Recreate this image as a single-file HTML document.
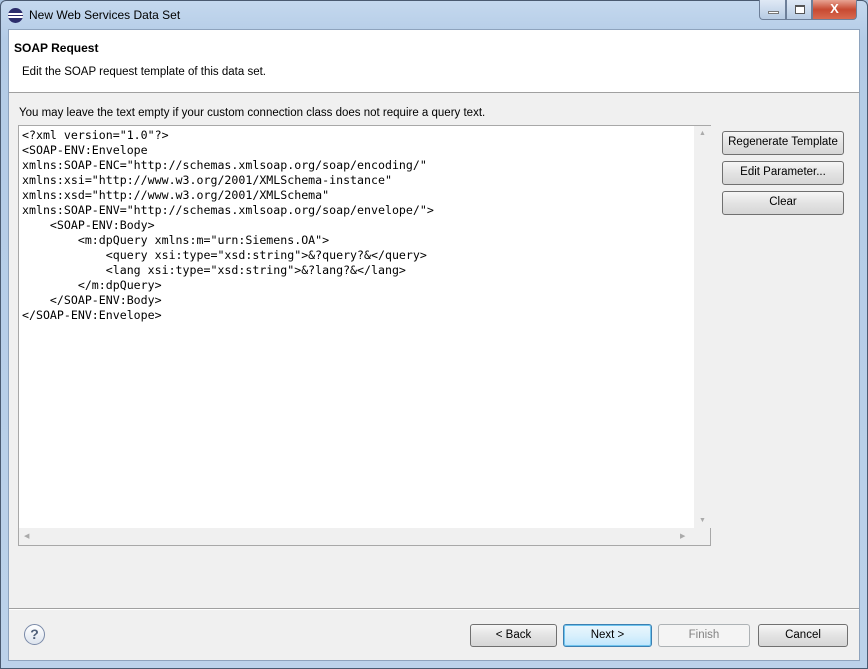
<!DOCTYPE html>
<html><head><style>
*{margin:0;padding:0;box-sizing:border-box}
body{width:868px;height:669px;overflow:hidden;background:#a9c3df;font-family:"Liberation Sans",sans-serif;font-size:11.5px;color:#000;position:relative}
.frame{position:absolute;left:0;top:0;width:868px;height:669px;background:linear-gradient(#c4d8ee,#b3cbe6 40px,#bcd2ea);border:1px solid #4a5a70;border-radius:6px 6px 0 0}
.title{position:absolute;left:29px;top:8px;font-size:12px;color:#000}
.icon{position:absolute;left:8px;top:8px;width:15px;height:15px;border-radius:50%;background:#2b2d6b;overflow:hidden}
.icon:before{content:"";position:absolute;left:0;top:5px;width:15px;height:1.5px;background:#fff;box-shadow:0 3px 0 #fff}
.wb{position:absolute;top:0;height:20px;border:1px solid #6d7f99;border-top:none}
.client{position:absolute;left:8px;top:29px;width:852px;height:632px;background:#f0f0f0;border:1px solid #8ea3bd}
.hdr{position:absolute;left:0;top:0;width:850px;height:63px;background:#fff;border-bottom:1px solid #a0a0a0}
.b{position:absolute;background:linear-gradient(#f6f6f6,#e3e3e3 50%,#d6d6d6);border:1px solid #707070;border-radius:3px;text-align:center;font-size:11.5px;line-height:21px}
.ta{position:absolute;left:18px;top:125px;width:693px;height:421px;border:1px solid #a8a8a8;background:#fff}
pre{position:absolute;left:3px;top:2px;font-family:"DejaVu Sans Mono","Liberation Mono",monospace;font-size:11.6px;line-height:15px;color:#000}
</style></head><body>
<div class="frame"></div>
<div class="icon"></div>
<div class="title">New Web Services Data Set</div>
<div class="wb" style="left:759px;width:27px;background:linear-gradient(#dfe9f5,#b7cbe3);border-radius:0 0 0 4px"><div style="position:absolute;left:8px;top:11px;width:11px;height:3px;border:1px solid #777;background:#fff"></div></div>
<div class="wb" style="left:786px;width:26px;background:linear-gradient(#dfe9f5,#b7cbe3)"><div style="position:absolute;left:8px;top:5px;width:10px;height:9px;border:1px solid #555;border-top-width:2px;background:#fff"></div></div>
<div class="wb" style="left:812px;width:45px;background:linear-gradient(#e8a493,#c74a32 50%,#d96a50);border-radius:0 0 4px 0;color:#fff;font-weight:bold;text-align:center;line-height:18px;font-size:13px">X</div>
<div class="client">
<div class="hdr">
<div style="position:absolute;left:5px;top:11px;font-weight:bold;font-size:12px">SOAP Request</div>
<div style="position:absolute;left:13px;top:36px">Edit the SOAP request template of this data set.</div>
</div>
<div style="position:absolute;left:10px;top:77px">You may leave the text empty if your custom connection class does not require a query text.</div>
<div style="position:absolute;left:0;top:578px;width:850px;border-top:1px solid #a0a0a0;border-bottom:1px solid #fff"></div>
</div>
<div class="ta"><pre>&lt;?xml version="1.0"?&gt;
&lt;SOAP-ENV:Envelope
xmlns:SOAP-ENC="http://schemas.xmlsoap.org/soap/encoding/"
xmlns:xsi="http://www.w3.org/2001/XMLSchema-instance"
xmlns:xsd="http://www.w3.org/2001/XMLSchema"
xmlns:SOAP-ENV="http://schemas.xmlsoap.org/soap/envelope/"&gt;
    &lt;SOAP-ENV:Body&gt;
        &lt;m:dpQuery xmlns:m="urn:Siemens.OA"&gt;
            &lt;query xsi:type="xsd:string"&gt;&amp;?query?&amp;&lt;/query&gt;
            &lt;lang xsi:type="xsd:string"&gt;&amp;?lang?&amp;&lt;/lang&gt;
        &lt;/m:dpQuery&gt;
    &lt;/SOAP-ENV:Body&gt;
&lt;/SOAP-ENV:Envelope&gt;</pre>
<div style="position:absolute;left:675px;top:0;width:17px;height:402px;background:#f0f0f0;color:#aaa;font-size:7px;text-align:center"><div style="margin-top:4px">▲</div><div style="position:absolute;bottom:4px;width:17px">▼</div></div>
<div style="position:absolute;left:0;top:402px;width:691px;height:17px;background:#f0f0f0;color:#aaa;font-size:7px;line-height:17px"><span style="position:absolute;left:5px">◀</span><span style="position:absolute;left:661px">▶</span></div>
</div>
<div class="b" style="left:722px;top:131px;width:122px;height:24px">Regenerate Template</div>
<div class="b" style="left:722px;top:161px;width:122px;height:24px">Edit Parameter...</div>
<div class="b" style="left:722px;top:191px;width:122px;height:24px">Clear</div>
<div style="position:absolute;left:24px;top:624px;width:21px;height:21px;border:1.5px solid #7a8aa8;border-radius:50%;background:linear-gradient(#fff,#dde4ee);text-align:center;font-weight:bold;color:#50607a;line-height:19px;font-size:14px">?</div>
<div class="b" style="left:470px;top:624px;width:87px;height:23px">&lt; Back</div>
<div class="b" style="left:563px;top:624px;width:89px;height:23px;border-color:#3c7fb1;box-shadow:inset 0 0 0 1px #6fc4ee;background:linear-gradient(#eaf6fd,#d9f0fc 50%,#bee6fd)">Next &gt;</div>
<div class="b" style="left:658px;top:624px;width:92px;height:23px;background:#f4f4f4;border-color:#adb2b5;color:#838383">Finish</div>
<div class="b" style="left:758px;top:624px;width:90px;height:23px">Cancel</div>
</body></html>
